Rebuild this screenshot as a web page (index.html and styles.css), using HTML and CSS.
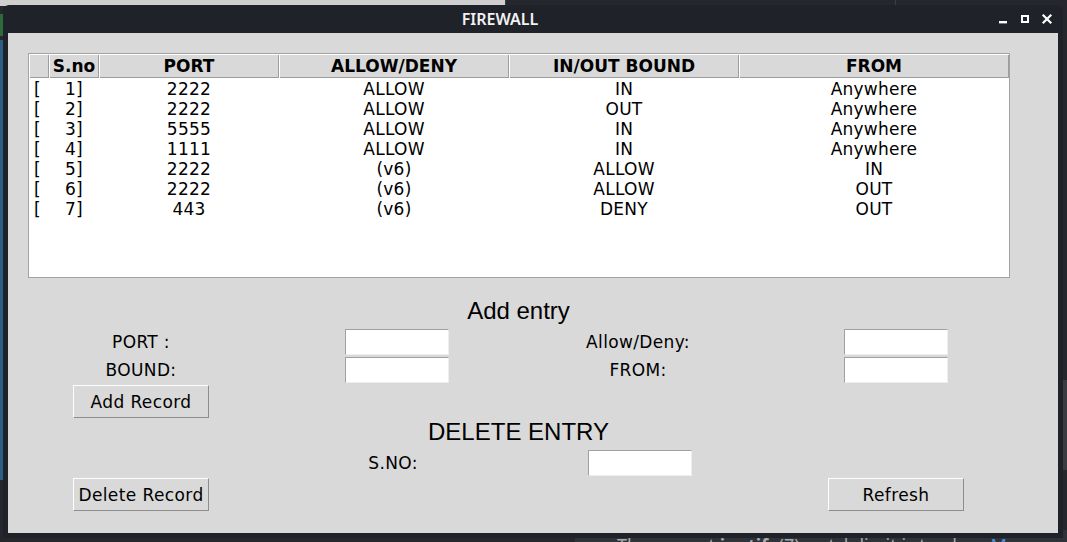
FILE: index.html
```html
<!DOCTYPE html>
<html lang="en">
<head>
<meta charset="utf-8">
<title>FIREWALL</title>
<link rel="stylesheet" href="styles.css">
</head>
<body>
<div class="desk">
  <div class="bg-topleft"></div>
  <div class="bg-topline bg-topline-a"></div>
  <div class="bg-topline bg-topline-b"></div>
  <div class="bg-green"></div>
  <div class="bg-blue"></div>
  <div class="bg-rightpanel"></div>
  <div class="bg-bottompanel"></div>
  <div class="bg-notice">The current <b>inotify</b>(7) watch limit is too low. <span class="more">More</span></div>

  <div class="window">
    <div class="titlebar">
      <div class="title">FIREWALL</div>
      <svg class="controls" width="66" height="28" viewBox="0 0 66 28">
        <rect x="2" y="16" width="8" height="2.4" fill="#fff"/>
        <rect x="25" y="11" width="6" height="6" fill="none" stroke="#fff" stroke-width="2"/>
        <path d="M46.5 10.5 L53.5 17.5 M53.5 10.5 L46.5 17.5" stroke="#fff" stroke-width="2.2" stroke-linecap="square"/>
      </svg>
    </div>
    <div class="content">
      <div class="tree">
        <div class="hd"></div>
        <div class="hd">S.no</div>
        <div class="hd">PORT</div>
        <div class="hd">ALLOW/DENY</div>
        <div class="hd">IN/OUT BOUND</div>
        <div class="hd">FROM</div>

        <div class="c0">[</div><div class="c">1]</div><div class="c">2222</div><div class="c">ALLOW</div><div class="c">IN</div><div class="c">Anywhere</div>
        <div class="c0">[</div><div class="c">2]</div><div class="c">2222</div><div class="c">ALLOW</div><div class="c">OUT</div><div class="c">Anywhere</div>
        <div class="c0">[</div><div class="c">3]</div><div class="c">5555</div><div class="c">ALLOW</div><div class="c">IN</div><div class="c">Anywhere</div>
        <div class="c0">[</div><div class="c">4]</div><div class="c">1111</div><div class="c">ALLOW</div><div class="c">IN</div><div class="c">Anywhere</div>
        <div class="c0">[</div><div class="c">5]</div><div class="c">2222</div><div class="c">(v6)</div><div class="c">ALLOW</div><div class="c">IN</div>
        <div class="c0">[</div><div class="c">6]</div><div class="c">2222</div><div class="c">(v6)</div><div class="c">ALLOW</div><div class="c">OUT</div>
        <div class="c0">[</div><div class="c">7]</div><div class="c">443</div><div class="c">(v6)</div><div class="c">DENY</div><div class="c">OUT</div>
      </div>

      <div class="form">
        <div class="heading">Add entry</div>

        <div class="lbl col1">PORT :</div>
        <input class="entry col2" type="text">
        <div class="lbl col3">Allow/Deny:</div>
        <input class="entry col5" type="text">

        <div class="lbl col1">BOUND:</div>
        <input class="entry col2" type="text">
        <div class="lbl col3">FROM:</div>
        <input class="entry col5" type="text">

        <button class="btn col1 btn-add" type="button">Add Record</button>

        <div class="heading">DELETE ENTRY</div>

        <div class="lbl col2 sno-lbl">S.NO:</div>
        <input class="entry col3 sno-entry" type="text">

        <button class="btn col1" type="button">Delete Record</button>
        <button class="btn col5" type="button">Refresh</button>
      </div>
    </div>
  </div>
</div>
</body>
</html>
```

FILE: styles.css
```css
html, body {
  margin: 0;
  padding: 0;
}
body {
  width: 1067px;
  height: 542px;
  overflow: hidden;
  background: #25272c;
  font-family: "DejaVu Sans", sans-serif;
}
.desk {
  position: relative;
  width: 1067px;
  height: 542px;
}
/* background desktop pieces (other windows) */
.bg-topleft {
  position: absolute;
  left: 0;
  top: 0;
  width: 505px;
  height: 6px;
  background: #cfcfcf;
}
.bg-topline {
  position: absolute;
  top: 0;
  width: 1px;
  height: 6px;
  background: #3a3d44;
}
.bg-topline-a { left: 505px; }
.bg-topline-b { left: 895px; }
.bg-green {
  position: absolute;
  left: 0;
  top: 14px;
  width: 3px;
  height: 22px;
  background: #2c6b3a;
}
.bg-blue {
  position: absolute;
  left: 0;
  top: 40px;
  width: 4px;
  height: 440px;
  background: #2b5f86;
}
.bg-rightpanel {
  position: absolute;
  left: 1063px;
  top: 380px;
  width: 4px;
  height: 90px;
  background: #3a3c40;
}
.bg-bottompanel {
  position: absolute;
  left: 575px;
  top: 530px;
  width: 492px;
  height: 12px;
  background: #2f3237;
}
.bg-notice {
  position: absolute;
  left: 617px;
  top: 535px;
  font-family: "Noto Sans", sans-serif;
  font-size: 18px;
  line-height: 20px;
  color: #a6a9ad;
  white-space: nowrap;
}
.bg-notice b { font-weight: 700; }
.bg-notice .more { color: #4b8fdc; }

/* main window */
.window {
  position: absolute;
  left: 3px;
  top: 5px;
  width: 1060px;
  height: 533px;
  background: #1f2229;
  border-radius: 6px 6px 0 0;
  display: flex;
  flex-direction: column;
}
.titlebar {
  height: 28px;
  display: flex;
  align-items: stretch;
  flex: none;
}
.title {
  flex: 1;
  text-align: center;
  color: #f2f2f2;
  font-family: "Noto Sans", sans-serif;
  font-weight: 600;
  font-size: 16px;
  line-height: 28px;
}
.controls {
  flex: none;
  width: 66px;
  height: 28px;
}
.content {
  flex: 1;
  margin: 0 5px 5px 5px;
  background: #d9d9d9;
  padding-top: 20px;
}

/* treeview */
.tree {
  margin-left: 20px;
  width: 982px;
  height: 225px;
  box-sizing: border-box;
  border: 1px solid #a3a3a3;
  background: #ffffff;
  display: grid;
  grid-template-columns: 20px 50px 180px 230px 230px 270px;
  grid-auto-rows: 20px;
  grid-template-rows: 24px;
  align-content: start;
  font-size: 17px;
  color: #000;
}
.hd {
  background: #d9d9d9;
  box-shadow: inset 1px 1px 0 #ffffff, inset -1px -1px 0 #9d9d9d;
  font-weight: bold;
  text-align: center;
  line-height: 24px;
  white-space: nowrap;
}
.c0 {
  line-height: 20px;
  padding: 1px 0 0 5px;
}
.c {
  line-height: 20px;
  padding-top: 1px;
  text-align: center;
  white-space: nowrap;
  letter-spacing: 0.25px;
}

/* form */
.form {
  margin: 19px 0 0 65px;
  display: grid;
  grid-template-columns: 136px 376px 106px 137px 136px;
  grid-template-rows: 31px 28px 28px 34px 31px 28px 35px;
  align-items: center;
  justify-items: center;
  font-size: 17px;
  color: #000;
}
.heading {
  grid-column: 1 / -1;
  align-self: start;
  font-family: "Liberation Sans", Arial, sans-serif;
  font-size: 24px;
  line-height: 28px;
}
.col1 { grid-column: 1; }
.col2 { grid-column: 2; }
.col3 { grid-column: 3; }
.col5 { grid-column: 5; }
.lbl {
  white-space: nowrap;
  line-height: 20px;
  letter-spacing: 0.35px;
}
.sno-lbl { margin-right: 8px; }
.entry {
  width: 104px;
  height: 26px;
  box-sizing: border-box;
  margin: 0;
  padding: 0;
  background: #ffffff;
  border-style: solid;
  border-width: 1px;
  border-color: #a0a0a0 #eeeeee #eeeeee #a0a0a0;
  outline: none;
}
.form .sno-entry {
  justify-self: start;
  margin-left: 3px;
}
.btn {
  width: 136px;
  height: 33px;
  box-sizing: border-box;
  margin: 0;
  padding: 2px 0 0 0;
  background: #d9d9d9;
  border-style: solid;
  border-width: 1px;
  border-color: #ffffff #8e8e8e #8e8e8e #ffffff;
  font-family: "DejaVu Sans", sans-serif;
  font-size: 17px;
  letter-spacing: 0.4px;
  color: #000;
  line-height: 29px;
}
.btn-add { align-self: end; }
```
